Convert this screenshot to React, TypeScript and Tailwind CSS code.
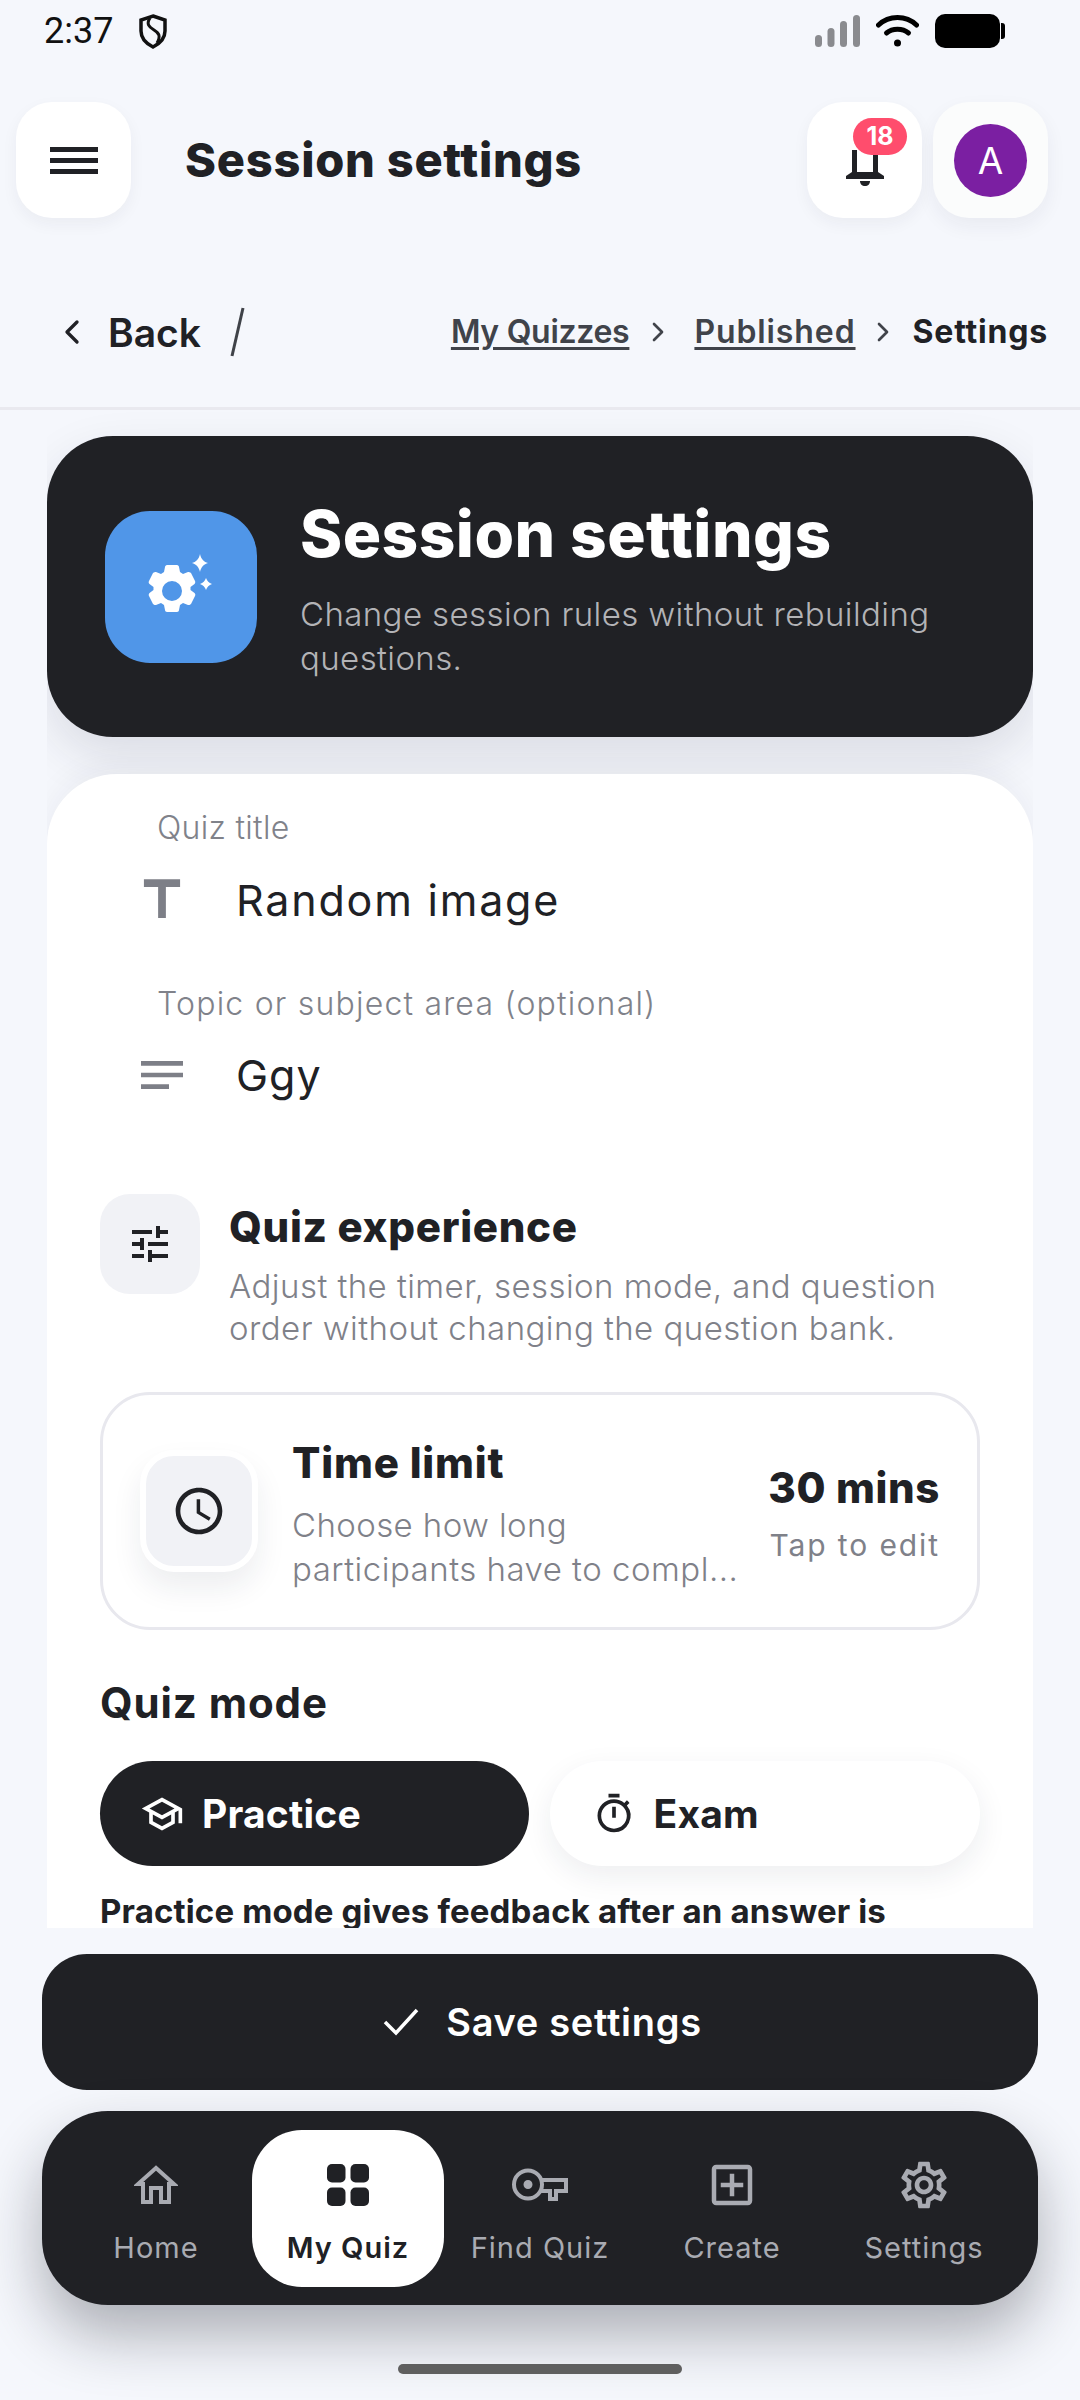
import { ChevronLeft, ChevronRight } from "lucide-react";
import { MdNotes, MdOutlineAccessTime, MdOutlineAddBox, MdOutlineSchool, MdOutlineSettings, MdOutlineTimer, MdTitle, MdTune } from "react-icons/md";

function GearSpark() {
  return (
    <svg className="ml-[2px]" width="68" height="66" viewBox="0 0 68 66" fill="#fff">
      <path fillRule="evenodd" d="M19 11h10c1 0 2 1 2 2l1 5 3 2 5-2c1 0 2 0 3 1l4 8c.5 1 .3 2-.5 3l-4 3v3l4 3c1 1 1 2 .5 3l-4 8c-1 1-2 1-3 1l-5-2-3 2-1 5c0 1-1 2-2 2H19c-1 0-2-1-2-2l-1-5-3-2-5 2c-1 0-2 0-3-1l-4-8c-.5-1-.3-2 .5-3l4-3v-3l-4-3c-1-1-1-2-.5-3l4-8c1-1 2-1 3-1l5 2 3-2 1-5c0-1 1-2 2-2zm5 16a10 10 0 1 0 0 20 10 10 0 0 0 0-20z" />
      <path d="M52 0c1 5 4 8 8 9-4 1-7 4-8 9-1-5-4-8-8-9 4-1 7-4 8-9z" />
      <path d="M58 24c1 3 3 5 6 6-3 1-5 3-6 6-1-3-3-5-6-6 3-1 5-3 6-6z" />
    </svg>
  );
}

function NavItem({ label, active, children }: { label: string; active?: boolean; children: React.ReactNode }) {
  return (
    <div className={`flex h-[157px] w-[192px] flex-col items-center rounded-[50px] pt-[24px] ${active ? "bg-white text-[#202125]" : "text-[#a9abb2]"}`}>
      <div className="flex h-[62px] items-center">{children}</div>
      <div className={`mt-[14px] text-[29px] leading-[36px] tracking-[1px] ${active ? "font-semibold" : "font-normal"}`}>{label}</div>
    </div>
  );
}

export default function App() {
  return (
    <div className="relative flex h-[2400px] w-[1080px] flex-col overflow-hidden bg-[#f5f7fc] font-[family-name:Inter,sans-serif] text-[#202125]">
      {/* status bar */}
      <div className="flex h-[60px] items-center pl-[44px] pr-[75px] pt-[2px]">
        <span className="font-[family-name:Roboto,sans-serif] text-[36px] leading-[38px] text-[#111]">2:37</span>
        <svg className="ml-[26px]" width="28" height="35" viewBox="0 0 28 35" fill="none" stroke="#111" strokeWidth="3.5">
          <path d="M14 2L26 6V17C26 25 20 30 14 33C8 30 2 25 2 17V6Z" />
          <path d="M11 4C7 10 10 13 15 16C20 19 22 22 18 29" strokeWidth="3" />
        </svg>
        <div className="ml-auto flex items-center">
          <svg width="45" height="32" viewBox="0 0 45 32" fill="#8a8b8f">
            <rect x="0" y="20" width="7" height="12" rx="3.5" />
            <rect x="12.5" y="13" width="7" height="19" rx="3.5" />
            <rect x="25" y="6" width="7" height="26" rx="3.5" />
            <rect x="38" y="0" width="7" height="32" rx="3.5" />
          </svg>
          <svg className="ml-[16px]" width="43" height="32" viewBox="0 0 43 32" fill="none" stroke="#000" strokeWidth="5" strokeLinecap="round">
            <path d="M2.5 10C13 0 30 0 40.5 10" />
            <path d="M10.5 18c6-5 16-5 22 0" />
            <circle cx="21.5" cy="28" r="3.5" fill="#000" stroke="none" />
          </svg>
          <div className="ml-[16px] h-[34px] w-[65px] rounded-[10px] bg-black" />
          <div className="ml-px h-[16px] w-[4px] rounded-r-[3px] bg-black" />
        </div>
      </div>

      {/* app bar */}
      <div className="mt-[42px] flex h-[116px] items-center pl-[16px] pr-[32px]">
        <div className="flex h-[116px] w-[115px] flex-col items-center justify-center gap-[6px] rounded-[36px] bg-white shadow-[0_6px_16px_rgba(30,35,60,0.05)]">
          <div className="h-[5px] w-[48px] bg-[#202125]" />
          <div className="h-[5px] w-[48px] bg-[#202125]" />
          <div className="h-[5px] w-[48px] bg-[#202125]" />
        </div>
        <h1 className="ml-[54px] text-[47px] font-extrabold leading-[56px] tracking-[0.75px]">Session settings</h1>
        <div className="relative ml-auto flex h-[116px] w-[115px] items-center justify-center rounded-[36px] bg-white shadow-[0_6px_16px_rgba(30,35,60,0.05)]">
          <svg className="absolute left-[38px] top-[48px]" width="40" height="36" viewBox="0 0 40 36" fill="#202125">
            <path d="M7 0h5v22h16V0h5v22l6 4v3H1v-3l6-4z" />
            <path d="M15 31h10c0 3-2 5-5 5s-5-2-5-5z" />
          </svg>
          <div className="absolute left-[46px] top-[16px] flex h-[37px] w-[54px] items-center justify-center rounded-full bg-[#ff4d6d] text-[25px] font-bold leading-none text-white">18</div>
        </div>
        <div className="ml-[11px] flex h-[116px] w-[115px] items-center justify-center rounded-[36px] bg-[#fbfcfc] shadow-[0_8px_20px_rgba(30,35,60,0.06)]">
          <div className="flex h-[73px] w-[73px] items-center justify-center rounded-full bg-[#7b1fa2] text-[37px] leading-none text-white">A</div>
        </div>
      </div>

      {/* breadcrumb */}
      <div className="mt-[78px] flex h-[72px] items-center pl-[52px] pr-[32px]">
        <ChevronLeft size={40} strokeWidth={2} className="text-[#202125]" />
        <span className="ml-[16px] text-[39px] font-semibold leading-none">Back</span>
        <svg className="ml-[28px]" width="16" height="50" viewBox="0 0 16 50" stroke="#3f4248" strokeWidth="3"><path d="M14 1L3 49" /></svg>
        <div className="ml-auto flex items-center text-[32px] font-semibold leading-none">
          <span className="text-[#40434a] underline underline-offset-[4px] tracking-[-0.3px]">My Quizzes</span>
          <ChevronRight size={32} strokeWidth={2} className="mx-[13px] text-[#40434a]" />
          <span className="ml-[7px] text-[#40434a] underline underline-offset-[4px] tracking-[0.9px]">Published</span>
          <ChevronRight size={32} strokeWidth={2} className="mx-[11px] text-[#40434a]" />
          <span className="ml-[3px] font-bold tracking-[0.8px]">Settings</span>
        </div>
      </div>

      <div className="mt-[39px] h-[3px] bg-[#e9e9ef]" />

      {/* scrolling content, cut off by the save button */}
      <div className="mx-[47px] h-[1518px] overflow-hidden">
        <div className="mt-[26px] flex h-[301px] items-center rounded-[66px] bg-[#202125] pl-[58px] pr-[50px] shadow-[0_20px_50px_rgba(30,35,60,0.12)]">
          <div className="flex h-[152px] w-[152px] shrink-0 items-center justify-center rounded-[45px] bg-[#5096e8]">
            <GearSpark />
          </div>
          <div className="ml-[43px] min-w-0 pt-[3px]">
            <h2 className="text-[64px] font-extrabold leading-[76px] tracking-[0.45px] text-white">Session settings</h2>
            <p className="mt-[20px] text-[33px] font-light leading-[44px] tracking-[0.4px] text-[#b3b3b6]">Change session rules without rebuilding questions.</p>
          </div>
        </div>

        <div className="mt-[37px] rounded-t-[70px] bg-white px-[53px] pb-[80px] pt-[34px] shadow-[0_-6px_30px_rgba(30,35,60,0.05)]">
          <div className="pl-[57px] text-[32px] font-light leading-[40px] tracking-[0.3px] text-[#80828a]">Quiz title</div>
          <div className="mt-[24px] flex h-[56px] items-center">
            <MdTitle size={62} className="ml-[31px] text-[#7d7f87]" />
            <span className="ml-[43px] text-[43px] leading-[56px] tracking-[1.8px]">Random image</span>
          </div>
          <div className="mt-[56px] pl-[57px] text-[32px] font-light leading-[40px] tracking-[1.2px] text-[#80828a]">Topic or subject area (optional)</div>
          <div className="mt-[23px] flex h-[56px] items-center">
            <MdNotes size={56} className="ml-[34px] text-[#7d7f87]" />
            <span className="ml-[46px] text-[43px] leading-[56px] tracking-[1px]">Ggy</span>
          </div>

          <div className="mt-[91px] flex">
            <div className="flex h-[100px] w-[100px] shrink-0 items-center justify-center rounded-[30px] bg-[#f1f2f6]">
              <MdTune size={48} />
            </div>
            <div className="ml-[29px] pt-[6px]">
              <h3 className="text-[42px] font-extrabold leading-[54px] tracking-[0.7px]">Quiz experience</h3>
              <p className="mt-[11px] text-[33px] font-light leading-[42px] tracking-[0.45px] text-[#7f8189]">Adjust the timer, session mode, and question order without changing the question bank.</p>
            </div>
          </div>

          <div className="mt-[43px] flex h-[238px] items-center overflow-hidden rounded-[50px] border-[3px] border-[#e8e8ee] pl-[37px] pr-[37px]">
            <div className="flex h-[122px] w-[118px] shrink-0 items-center justify-center rounded-[34px] border-[6px] border-white bg-[#f1f2f6] shadow-[0_16px_30px_rgba(30,35,60,0.08)]">
              <MdOutlineAccessTime size={56} />
            </div>
            <div className="ml-[34px] min-w-0 flex-1 pt-[6px]">
              <div className="text-[42px] font-extrabold leading-[52px] tracking-[0.8px]">Time limit</div>
              <p className="mt-[14px] text-[33px] font-light leading-[44px] tracking-[0.4px] text-[#7f8189]">Choose how long</p>
              <p className="whitespace-nowrap text-[33px] font-light leading-[44px] tracking-[0.5px] text-[#7f8189]">participants have to compl...</p>
            </div>
            <div className="ml-[16px] shrink-0 pt-[2px] text-right">
              <div className="text-[42px] font-extrabold leading-[52px] tracking-[0.6px]">30 mins</div>
              <div className="mt-[13px] text-[30px] leading-[36px] tracking-[1.9px] text-[#7f8189]">Tap to edit</div>
            </div>
          </div>

          <h3 className="mt-[48px] text-[42px] font-bold leading-[50px] tracking-[0.9px]">Quiz mode</h3>
          <div className="mt-[33px] flex gap-[21px]">
            <div className="flex h-[105px] flex-1 items-center rounded-full bg-[#202125] pl-[40px] text-white">
              <MdOutlineSchool size={44} />
              <span className="ml-[18px] text-[39px] font-bold leading-none tracking-[0.2px]">Practice</span>
            </div>
            <div className="flex h-[105px] flex-1 items-center rounded-full bg-white pl-[42px] shadow-[0_10px_30px_rgba(30,35,60,0.08)]">
              <MdOutlineTimer size={44} />
              <span className="ml-[18px] text-[39px] font-bold leading-none tracking-[0.2px]">Exam</span>
            </div>
          </div>
          <p className="mt-[25px] text-[33px] font-bold leading-[40px] tracking-[0.15px]">Practice mode gives feedback after an answer is</p>
        </div>
      </div>

      {/* save button */}
      <div className="mx-[42px] mt-[26px] flex h-[136px] shrink-0 items-center justify-center rounded-[45px] bg-[#202125] pl-[5px] text-white">
        <svg width="36" height="28" viewBox="0 0 36 28" fill="none" stroke="#fff" strokeWidth="3.5"><path d="M2 14L13 25L34 2" /></svg>
        <span className="ml-[27px] text-[38px] font-semibold leading-none tracking-[0.7px]">Save settings</span>
      </div>

      {/* bottom nav */}
      <div className="mx-[42px] mt-[21px] flex h-[194px] shrink-0 items-center justify-center rounded-[66px] bg-[#202125] shadow-[0_30px_60px_rgba(20,22,35,0.32)]">
        <NavItem label="Home">
          <svg width="44" height="39" viewBox="0 0 44 39" fill="none" stroke="#a9abb2" strokeWidth="4">
            <path d="M22 3L4 19H9V37H17V23H27V37H35V19H40Z" />
          </svg>
        </NavItem>
        <NavItem label="My Quiz" active>
          <svg width="42" height="42" viewBox="0 0 42 42" fill="#202125">
            <rect x="0" y="0" width="18.5" height="18.5" rx="5" />
            <rect x="23.5" y="0" width="18.5" height="18.5" rx="5" />
            <rect x="0" y="23.5" width="18.5" height="18.5" rx="5" />
            <rect x="23.5" y="23.5" width="18.5" height="18.5" rx="5" />
          </svg>
        </NavItem>
        <NavItem label="Find Quiz">
          <svg width="56" height="33" viewBox="0 0 56 33" fill="none" stroke="#a9abb2" strokeWidth="4">
            <circle cx="16" cy="16.5" r="14" />
            <circle cx="16" cy="16.5" r="3.5" fill="#a9abb2" strokeWidth="2" />
            <path d="M29 12H54V23H44V31H38V23H29" />
          </svg>
        </NavItem>
        <NavItem label="Create"><MdOutlineAddBox size={54} /></NavItem>
        <NavItem label="Settings"><MdOutlineSettings size={56} /></NavItem>
      </div>

      {/* gesture bar */}
      <div className="mx-auto mt-[59px] h-[10px] w-[284px] shrink-0 rounded-full bg-[#5f5f5f]" />
    </div>
  );
}
